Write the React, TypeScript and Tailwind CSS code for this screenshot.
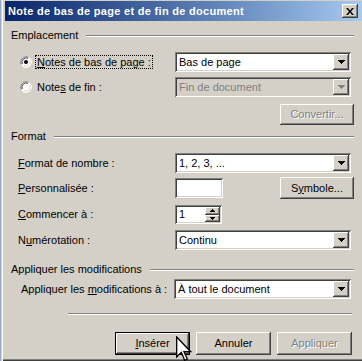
import React from "react";

const sunken =
  "shadow-[inset_1px_1px_0_#808080,inset_-1px_-1px_0_#ffffff,inset_2px_2px_0_#404040,inset_-2px_-2px_0_#d4d0c8]";
const raised =
  "shadow-[inset_-1px_-1px_0_#404040,inset_1px_1px_0_#ffffff,inset_-2px_-2px_0_#808080,inset_2px_2px_0_#d4d0c8]";

function Arrow({ disabled = false }: { disabled?: boolean }) {
  return (
    <svg width="7" height="4" viewBox="0 0 7 4">
      <path d="M0 0h7v1H0zM1 1h5v1H1zM2 2h3v1H2zM3 3h1v1H3z" fill={disabled ? "#808080" : "#000"} />
    </svg>
  );
}

function Select({ value, disabled = false, w = "w-[176px]" }: { value: string; disabled?: boolean; w?: string }) {
  return (
    <div
      className={`${w} h-[20px] ${sunken} ${disabled ? "bg-[#d4d0c8] text-[#808080]" : "bg-white text-black"} flex items-center p-[2px]`}
    >
      <span className="flex-1 pl-[2px] leading-[16px] whitespace-nowrap">{value}</span>
      <div className={`w-[16px] h-[16px] bg-[#d4d0c8] ${raised} flex items-center justify-center`}>
        <Arrow disabled={disabled} />
      </div>
    </div>
  );
}

function Button({
  children,
  disabled = false,
  isDefault = false,
  w = "w-[74px]",
  h = "h-[23px]",
}: {
  children: React.ReactNode;
  disabled?: boolean;
  isDefault?: boolean;
  w?: string;
  h?: string;
}) {
  return (
    <div className={`${w} ${h} ${isDefault ? "border border-black" : ""} bg-[#d4d0c8]`}>
      <div
        className={`w-full h-full ${raised} flex items-center justify-center ${
          disabled ? "text-[#808080] [text-shadow:1px_1px_0_#ffffff]" : "text-black"
        }`}
      >
        {children}
      </div>
    </div>
  );
}

function Radio({ checked }: { checked: boolean }) {
  return (
    <svg width="12" height="12" viewBox="0 0 12 12" className="shrink-0">
      <circle cx="6" cy="6" r="5.5" fill="#ffffff" />
      <path d="M1.2 8.5A5.5 5.5 0 0 1 8.5 1.2" stroke="#808080" strokeWidth="1" fill="none" />
      <path d="M2.2 8A4.5 4.5 0 0 1 8 2.2" stroke="#404040" strokeWidth="1" fill="none" />
      <path d="M3.5 10.8A5.5 5.5 0 0 0 10.8 3.5" stroke="#ffffff" strokeWidth="1" fill="none" />
      <path d="M4 9.8A4.5 4.5 0 0 0 9.8 4" stroke="#d4d0c8" strokeWidth="1" fill="none" />
      {checked && <circle cx="6" cy="6" r="2" fill="#000" />}
    </svg>
  );
}

function GroupHeader({ label, mt }: { label: string; mt: string }) {
  return (
    <div className={`flex items-center h-[13px] ${mt} pl-[6px] pr-[8px]`}>
      <span className="whitespace-nowrap">{label}</span>
      <div className="flex-1 ml-[8px] border-t border-[#808080] border-b border-b-white" />
    </div>
  );
}

export default function App() {
  return (
    <div
      className="w-[362px] h-[361px] overflow-hidden flex bg-[#d4d0c8] text-[11px] text-black leading-[13px]"
      style={{ fontFamily: '"Liberation Sans", Arial, sans-serif' }}
    >
      <div className="w-[1px] bg-[#9aa9c4]" />
      <div className="relative flex-1 flex flex-col pl-[3px] pt-[1px] border-l border-[#d4d0c8] shadow-[inset_1px_0_0_#ffffff,inset_0_-1px_0_#404040,inset_0_-2px_0_#808080]">
        {/* Title bar */}
        <div className="h-[20px] flex items-center pl-[3px] pr-[4px] bg-gradient-to-r from-[#0a246a] to-[#a6caf0]">
          <span className="flex-1 font-bold text-white whitespace-nowrap tracking-[0.3px]">
            Note de bas de page et de fin de document
          </span>
          <div className={`w-[16px] h-[14px] bg-[#d4d0c8] ${raised} flex items-center justify-center`}>
            <svg width="8" height="7" viewBox="0 0 8 7">
              <path d="M0 0h2l2 2.5L6 0h2L5 3.5 8 7H6L4 4.5 2 7H0l3-3.5z" fill="#000" />
            </svg>
          </div>
        </div>

        {/* Emplacement */}
        <GroupHeader label="Emplacement" mt="mt-[8px]" />

        <div className="flex items-center h-[20px] mt-[10px] pl-[15px]">
          <Radio checked />
          <div className="w-[140px] ml-[3px]">
            <span className="inline-block border border-dotted border-black px-[1px] py-[0px] leading-[12px]">
              <u>N</u>otes de bas de page :
            </span>
          </div>
          <Select value="Bas de page" />
        </div>

        <div className="flex items-center h-[20px] mt-[5px] pl-[15px]">
          <Radio checked={false} />
          <div className="w-[140px] ml-[3px] pl-[2px]">
            Note<u>s</u> de fin :
          </div>
          <Select value="Fin de document" disabled />
        </div>

        <div className="flex justify-end mt-[7px] pr-[8px]">
          <Button disabled w="w-[74px]" h="h-[21px]">
            Convertir...
          </Button>
        </div>

        {/* Format */}
        <GroupHeader label="Format" mt="mt-[5px]" />

        <div className="flex items-center h-[20px] mt-[10px] pl-[13px]">
          <div className="w-[157px]">
            <u>F</u>ormat de nombre :
          </div>
          <Select value="1, 2, 3, ..." />
        </div>

        <div className="flex items-center h-[22px] mt-[4px] pl-[13px] pr-[8px]">
          <div className="w-[157px]">
            <u>P</u>ersonnalisée :
          </div>
          <div className={`w-[48px] h-[20px] bg-white ${sunken}`} />
          <div className="flex-1" />
          <Button w="w-[74px]" h="h-[22px]">
            S<u>y</u>mbole...
          </Button>
        </div>

        <div className="flex items-center h-[20px] mt-[5px] pl-[13px]">
          <div className="w-[157px]">
            <u>C</u>ommencer à :
          </div>
          <div className={`w-[47px] h-[19px] bg-white ${sunken} flex items-center p-[2px]`}>
            <span className="flex-1 pl-[2px]">1</span>
            <div className="flex flex-col w-[15px] h-[15px]">
              <div className={`h-[8px] bg-[#d4d0c8] ${raised} flex items-center justify-center`}>
                <svg width="5" height="3" viewBox="0 0 5 3">
                  <path d="M2 0h1v1h1v1h1v1H0V2h1V1h1z" fill="#000" />
                </svg>
              </div>
              <div className={`h-[7px] bg-[#d4d0c8] ${raised} flex items-center justify-center`}>
                <svg width="5" height="3" viewBox="0 0 5 3">
                  <path d="M0 0h5v1H4v1H3v1H2V2H1V1H0z" fill="#000" />
                </svg>
              </div>
            </div>
          </div>
        </div>

        <div className="flex items-center h-[20px] mt-[6px] pl-[13px]">
          <div className="w-[157px]">
            N<u>u</u>mérotation :
          </div>
          <Select value="Continu" />
        </div>

        {/* Appliquer les modifications */}
        <GroupHeader label="Appliquer les modifications" mt="mt-[13px]" />

        <div className="flex items-center h-[20px] mt-[3px] pl-[16px]">
          <div className="w-[153px]">
            Appliquer les <u>m</u>odifications à :
          </div>
          <Select value="À tout le document" w="w-[177px]" />
        </div>

        <div className="mt-[14px] ml-[63px] mr-[10px] border-t border-[#808080] border-b border-b-white" />

        <div className="flex justify-end gap-[6px] mt-[17px] pr-[10px]">
          <Button isDefault w="w-[75px]">
            <u>I</u>nsérer
          </Button>
          <Button w="w-[75px]">Annuler</Button>
          <Button disabled w="w-[75px]">
            Appliquer
          </Button>
        </div>

        {/* Mouse cursor */}
        <svg
          className="absolute left-[174px] top-[336px]"
          width="16"
          height="26"
          viewBox="0 0 12 19"
        >
          <path
            d="M0.5 0.5v15l3.5-3.5 2.5 6 2-1-2.5-5.5h5z"
            fill="#ffffff"
            stroke="#000"
            strokeWidth="1"
            strokeLinejoin="miter"
          />
        </svg>
      </div>
    </div>
  );
}
